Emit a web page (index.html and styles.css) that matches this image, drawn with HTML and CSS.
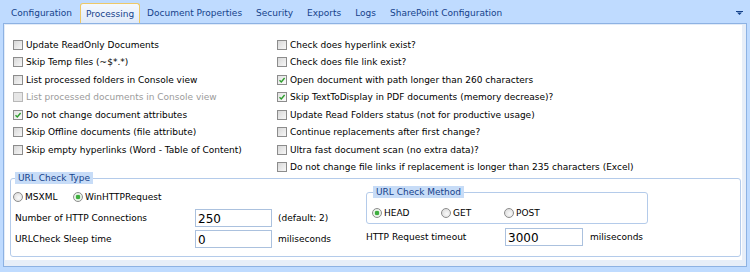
FILE: index.html
```html
<!DOCTYPE html>
<html>
<head>
<meta charset="utf-8">
<title>Processing</title>
<link rel="stylesheet" href="styles.css">
</head>
<body>
<div class="tabs">
  <div class="tab">Configuration</div>
  <div class="tab active">Processing</div>
  <div class="tab">Document Properties</div>
  <div class="tab">Security</div>
  <div class="tab">Exports</div>
  <div class="tab">Logs</div>
  <div class="tab">SharePoint Configuration</div>
  <svg class="menu-arrow" width="7" height="4" viewBox="0 0 7 4"><rect x="0" y="0" width="7" height="1" fill="#15428b"/><path d="M1 1.5 H6 L3.5 4 Z" fill="#15428b"/></svg>
</div>
<div class="panel">
  <div class="checks">
    <div class="col col-left">
      <label class="chk"><span class="box"></span>Update ReadOnly Documents</label>
      <label class="chk"><span class="box"></span>Skip Temp files (~$*.*)</label>
      <label class="chk"><span class="box"></span>List processed folders in Console view</label>
      <label class="chk disabled"><span class="box"></span>List processed documents in Console view</label>
      <label class="chk"><span class="box checked"><svg width="8" height="8" viewBox="0 0 8 8"><path d="M1.5 4.2 L3.3 6 L6.6 2" fill="none" stroke="#2d9d2d" stroke-width="1.4"/></svg></span>Do not change document attributes</label>
      <label class="chk"><span class="box"></span>Skip Offline documents (file attribute)</label>
      <label class="chk"><span class="box"></span>Skip empty hyperlinks (Word - Table of Content)</label>
    </div>
    <div class="col">
      <label class="chk"><span class="box"></span>Check does hyperlink exist?</label>
      <label class="chk"><span class="box"></span>Check does file link exist?</label>
      <label class="chk"><span class="box checked"><svg width="8" height="8" viewBox="0 0 8 8"><path d="M1.5 4.2 L3.3 6 L6.6 2" fill="none" stroke="#2d9d2d" stroke-width="1.4"/></svg></span>Open document with path longer than 260 characters</label>
      <label class="chk"><span class="box checked"><svg width="8" height="8" viewBox="0 0 8 8"><path d="M1.5 4.2 L3.3 6 L6.6 2" fill="none" stroke="#2d9d2d" stroke-width="1.4"/></svg></span>Skip TextToDisplay in PDF documents (memory decrease)?</label>
      <label class="chk"><span class="box"></span>Update Read Folders status (not for productive usage)</label>
      <label class="chk"><span class="box"></span>Continue replacements after first change?</label>
      <label class="chk"><span class="box"></span>Ultra fast document scan (no extra data)?</label>
      <label class="chk"><span class="box"></span>Do not change file links if replacement is longer than 235 characters (Excel)</label>
    </div>
  </div>
  <fieldset class="group">
    <legend class="group-title">URL Check Type</legend>
    <div class="group-body">
      <div class="left">
        <div class="radios">
          <label class="rad rad-ms"><span class="dot"></span>MSXML</label>
          <label class="rad"><span class="dot on"></span>WinHTTPRequest</label>
        </div>
        <div class="form-row first">
          <span class="form-label">Number of HTTP Connections</span>
          <input class="field" value="250">
          <span class="hint">(default: 2)</span>
        </div>
        <div class="form-row">
          <span class="form-label">URLCheck Sleep time</span>
          <input class="field" value="0">
          <span class="hint">miliseconds</span>
        </div>
      </div>
      <div class="right">
        <fieldset class="subgroup">
          <legend class="sub-title">URL Check Method</legend>
          <div class="radios sub-radios">
            <label class="rad rad-head"><span class="dot on"></span>HEAD</label>
            <label class="rad rad-get"><span class="dot"></span>GET</label>
            <label class="rad"><span class="dot"></span>POST</label>
          </div>
        </fieldset>
        <div class="form-row timeout">
          <span class="form-label wide">HTTP Request timeout</span>
          <input class="field field-w" value="3000">
          <span class="hint hint-r">miliseconds</span>
        </div>
      </div>
    </div>
  </fieldset>
</div>
</body>
</html>
```
FILE: styles.css
```css
html, body {
  margin: 0;
  padding: 0;
}
body {
  width: 750px;
  height: 272px;
  overflow: hidden;
  background: #bfdbff;
  font-family: "DejaVu Sans", Verdana, sans-serif;
  font-size: 9px;
  color: #000;
}
.tabs {
  display: flex;
  align-items: flex-end;
  height: 23px;
  padding-left: 4px;
}
.tab {
  padding: 0 7px;
  height: 20px;
  line-height: 20px;
  color: #15428b;
  white-space: nowrap;
}
.tab.active {
  padding: 0 5px;
  margin-left: 1px;
  height: 19px;
  line-height: 20px;
  background: linear-gradient(#f4f8fe, #dfeafa);
  border: 1px solid #eec866;
  border-bottom: none;
  border-radius: 3px 3px 0 0;
}
.menu-arrow {
  margin-left: auto;
  margin-right: 7px;
  align-self: center;
  margin-top: 3px;
}
.panel {
  margin: 0 3px;
  height: 242px;
  border: 1px solid #8db2e3;
  background: #fff;
  box-shadow: inset 1px 1px 0 #e3ecf8, inset -4px -6px 0 #e7eef8;
}
.checks {
  display: flex;
  padding: 12px 0 0 9px;
  margin-bottom: -4px;
}
.col {
  display: grid;
  grid-auto-rows: 17.5px;
  align-items: center;
}
.col-left {
  width: 264px;
}
.chk, .rad {
  display: flex;
  align-items: center;
  white-space: nowrap;
}
.box {
  width: 8px;
  height: 8px;
  border: 1px solid #8c8c8c;
  background: linear-gradient(135deg, #d8d8d8, #f7f7f7);
  margin-right: 3px;
  display: flex;
  align-items: center;
  justify-content: center;
  flex: none;
}
.box.checked {
  background: linear-gradient(135deg, #e2e2e2, #fbfbfb);
}
.disabled {
  color: #9b9b9b;
}
.disabled .box {
  border-color: #b8b8b8;
  background: #e6e6e6;
}
.group {
  margin: 0 5px 0 6px;
  padding: 0;
  border: 1px solid #b4cbea;
  border-radius: 3px;
}
.group-title, .sub-title {
  padding: 0 3px;
  margin-left: 4px;
  line-height: 12px;
  background: #c7dcf7;
  color: #15428b;
}
.sub-title {
  margin-left: 6px;
}
.group-body {
  display: flex;
}
.left {
  width: 355px;
  padding: 6px 0 8px 0;
}
.radios {
  display: flex;
  height: 14px;
  align-items: center;
  padding-left: 2px;
}
.rad-ms {
  width: 60px;
}
.dot {
  width: 8px;
  height: 8px;
  border: 1px solid #8c8c8c;
  border-radius: 50%;
  background: radial-gradient(circle at 60% 60%, #fafafa, #d6d6d6);
  margin-right: 2px;
  flex: none;
  position: relative;
}
.dot.on {
  background: radial-gradient(circle, #3fae3f 0, #3fae3f 2px, #e6f3e6 2.6px, #f2f2f2 100%);
}
.form-row {
  display: flex;
  align-items: center;
  height: 18px;
  padding-left: 4px;
  margin-top: 3px;
}
.form-row.first {
  margin-top: 5px;
}
.form-label {
  width: 180px;
  flex: none;
}
.field {
  box-sizing: border-box;
  width: 77px;
  height: 18px;
  border: 1px solid #abc1de;
  padding: 1px 0 0 2px;
  margin: 0;
  font-family: "DejaVu Sans", Verdana, sans-serif;
  font-size: 12px;
  color: #000;
  background: #fff;
}
.hint {
  margin-left: 6px;
}
.right {
  padding-top: 2px;
}
.subgroup {
  width: 280px;
  margin: 0;
  padding: 0 0 3px 0;
  border: 1px solid #b4cbea;
  border-radius: 3px;
}
.sub-radios {
  margin-top: 8px;
  padding-left: 5px;
}
.rad-head {
  width: 69px;
}
.rad-get {
  width: 63px;
}
.form-row.timeout {
  padding-left: 0;
  margin-top: 4px;
}
.form-label.wide {
  width: 139px;
}
.field-w {
  width: 78px;
}
.hint-r {
  margin-left: 7px;
}
```
